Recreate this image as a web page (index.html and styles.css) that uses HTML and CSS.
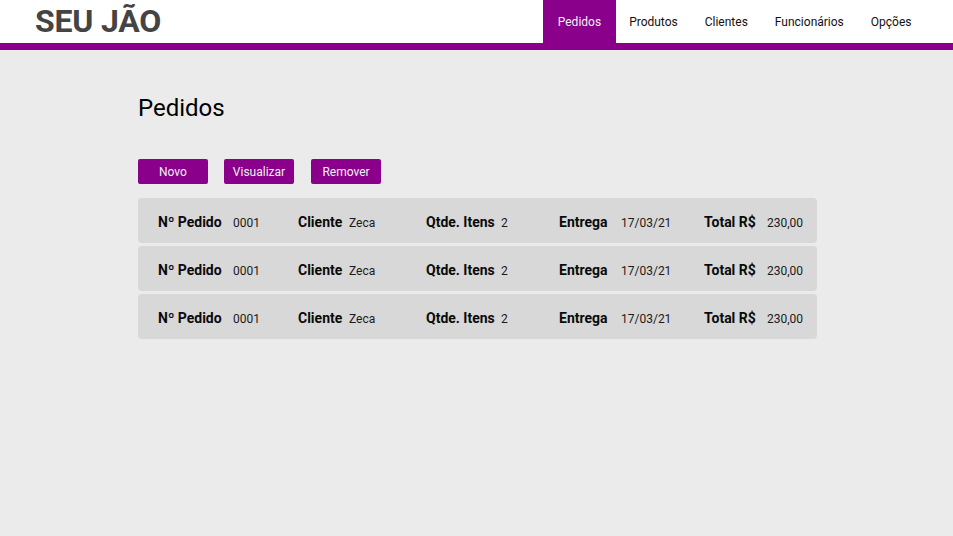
FILE: index.html
```html
<!DOCTYPE html>
<html lang="pt-BR">
<head>
<meta charset="utf-8">
<title>Seu Jão - Pedidos</title>
<link rel="stylesheet" href="styles.css">
</head>
<body>
<header class="topbar">
  <div class="logo">SEU JÃO</div>
  <nav class="nav">
    <a class="nav-item active">Pedidos</a>
    <a class="nav-item">Produtos</a>
    <a class="nav-item">Clientes</a>
    <a class="nav-item">Funcionários</a>
    <a class="nav-item">Opções</a>
  </nav>
</header>
<main class="content">
  <h1 class="title">Pedidos</h1>
  <div class="actions">
    <button class="btn">Novo</button>
    <button class="btn">Visualizar</button>
    <button class="btn">Remover</button>
  </div>
  <div class="list">
    <div class="row">
      <span class="lbl">Nº Pedido</span><span class="val">0001</span>
      <span class="lbl">Cliente</span><span class="val">Zeca</span>
      <span class="lbl">Qtde. Itens</span><span class="val">2</span>
      <span class="lbl">Entrega</span><span class="val">17/03/21</span>
      <span class="lbl">Total R$</span><span class="val">230,00</span>
    </div>
    <div class="row">
      <span class="lbl">Nº Pedido</span><span class="val">0001</span>
      <span class="lbl">Cliente</span><span class="val">Zeca</span>
      <span class="lbl">Qtde. Itens</span><span class="val">2</span>
      <span class="lbl">Entrega</span><span class="val">17/03/21</span>
      <span class="lbl">Total R$</span><span class="val">230,00</span>
    </div>
    <div class="row">
      <span class="lbl">Nº Pedido</span><span class="val">0001</span>
      <span class="lbl">Cliente</span><span class="val">Zeca</span>
      <span class="lbl">Qtde. Itens</span><span class="val">2</span>
      <span class="lbl">Entrega</span><span class="val">17/03/21</span>
      <span class="lbl">Total R$</span><span class="val">230,00</span>
    </div>
  </div>
</main>
</body>
</html>
```
FILE: styles.css
```css
* { box-sizing: border-box; }
html, body {
  margin: 0;
  padding: 0;
  height: 100%;
}
body {
  background: #ebebeb;
  font-family: Roboto, "Liberation Sans", sans-serif;
  color: #000;
}
.topbar {
  height: 50px;
  background: #fff;
  border-bottom: 7px solid #8a008a;
  display: flex;
  justify-content: space-between;
  align-items: stretch;
  padding-left: 35px;
  padding-right: 28px;
}
.logo {
  font-size: 32px;
  font-weight: 700;
  color: #444;
  line-height: 43px;
  letter-spacing: -0.2px;
}
.nav {
  display: flex;
  align-items: stretch;
}
.nav-item {
  display: flex;
  align-items: center;
  padding: 0 13.5px;
  font-size: 12px;
  color: #111;
  text-decoration: none;
}
.nav-item.active {
  background: #8a008a;
  color: #f2f2f2;
  padding: 0 14.5px;
}
.content {
  padding: 0 136px 0 138px;
}
.title {
  margin: 0;
  padding-top: 42px;
  font-size: 24px;
  font-weight: 400;
  line-height: 32px;
}
.actions {
  display: flex;
  gap: 16px;
  margin-top: 35px;
  margin-bottom: 14px;
}
.btn {
  width: 70px;
  height: 25px;
  border: 0;
  border-radius: 2px;
  background: #8a008a;
  color: #f2f2f2;
  font-family: Roboto, "Liberation Sans", sans-serif;
  font-size: 12px;
  padding: 0;
}
.actions .btn:nth-child(3) { margin-left: 1px; }
.list {
  display: flex;
  flex-direction: column;
  gap: 3px;
  width: 679px;
}
.row {
  height: 45px;
  background: #d8d8d8;
  border-radius: 4px;
  display: grid;
  grid-template-columns: 75px 65px 51px 77px 75px 58px 62px 83px 63px auto;
  align-items: center;
  padding-left: 20px;
  padding-top: 3px;
}
.lbl {
  font-size: 14px;
  font-weight: 700;
  color: #0a0a0a;
}
.val {
  font-size: 12px;
  color: #1a1a1a;
  padding-top: 1px;
}
```
